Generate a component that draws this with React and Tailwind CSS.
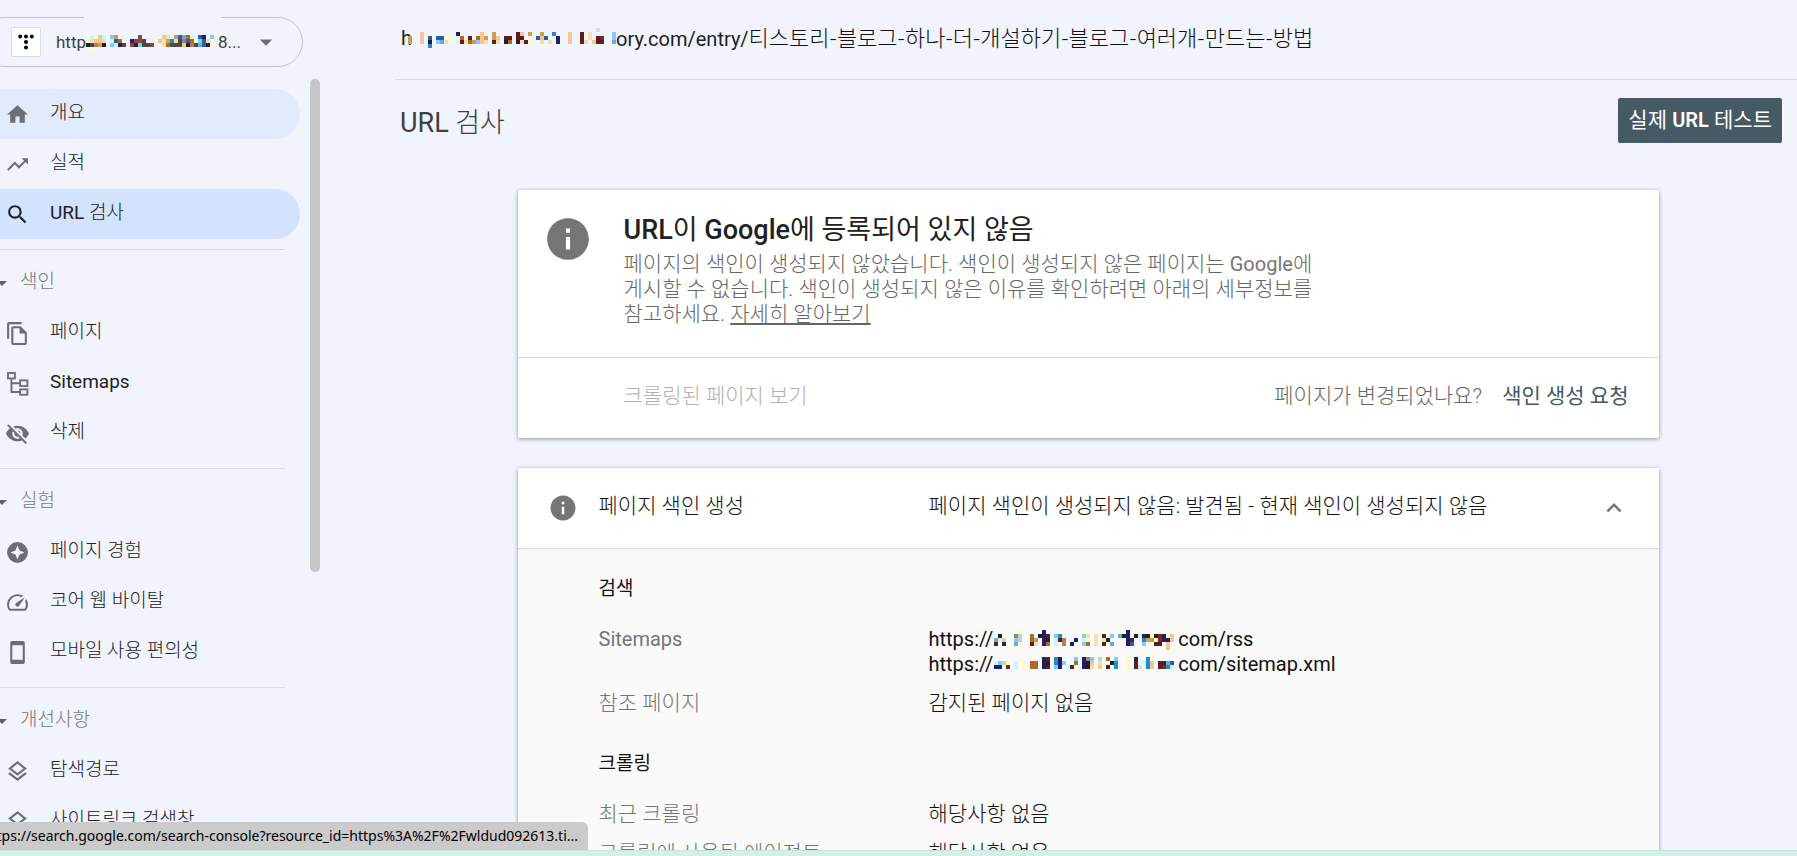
import React from "react";
import {
    MdHome,
    MdTrendingUp,
    MdSearch,
    MdOutlineFileCopy,
    MdVisibilityOff,
    MdSpeed,
    MdStayCurrentPortrait,
    MdOutlineLayers,
    MdInfo,
    MdExpandLess,
    MdArrowDropDown,
} from "react-icons/md";

// One letter per colour of the censored strips
const PALETTE = {
    k: "#222222",
    n: "#1f1f66",
    r: "#5c1f1f",
    R: "#8a2020",
    o: "#b06a20",
    g: "#cf9c55",
    b: "#1f8ccb",
    B: "#2462a8",
    s: "#8ac8f8",
    m: "#66aae4",
    c: "#c8f6fc",
    w: "#eef9fd",
    y: "#fbfbcc",
    e: "#f4dfae",
    p: "#f5c68f",
    t: "#a8825e",
    G: "#b9dcc0",
    l: "#e4d7e4",
    d: "#4a4a4a",
    D: "#8f4444",
};

const PROPERTY_MASK = [
    "wcypc.sg.....D.....pe.gBmoc.Bn.s.",
    "yeppe.cBo..nDDd...pegbedtBoysBey.",
    "kdtgk.scnd.DksddD..eodddpktdmBkwy",
    "wy...............................",
];

const ADDRESS_MASK = [
    "...............................................l....",
    "...p......w.n.....p..g.....rp.gy.g..b...p..r.e.....s",
    "g..p.B.BB.yw.o.r.opg.gp.rr.rr...BpBw.n..p..r.e.rR..s",
    "g..p.k.smeywcreogspe.re.ko.kery..e.e.nw.p..re.prr..m",
    ".....b..............................................",
];

const RSS_MASK = [
    "......y.....n....................n............",
    ".k...tG..o.knr.sb..ww.se.e.rws.mknwkcnkykRnyp.",
    "mcp..sG..og.nk.crt.wn.cy.e.ek....nr..bggyRnnp.",
    "r.n..my.wre.no.c.t.n..so.e.r.m...nBw.sw.rr.pw.",
    "...........................................p..",
];

const SITEMAP_MASK = [
    "......y.....nr.bn..ws.nts.G.o.s..y.n..b...w...",
    "csGy.c.y.oo.nk.bns.wo.nkp.e..kb..y.r.cbp.rrmB.",
    "nn.R.c.y.oo.nr.sn.cr..nke.p.r.b..y.rl.bp.rRbc.",
    "...........................................y..",
];

function Mask({ rows, className }) {
    const width = rows[0].length * 4;
    const height = rows.length * 4;
    return (
        <svg
            width={width}
            height={height}
            viewBox={`0 0 ${width} ${height}`}
            shapeRendering="crispEdges"
            aria-hidden="true"
            className={`inline-block shrink-0 ${className || ""}`}
        >
            {rows.map((row, y) =>
                row.split("").map((cell, x) =>
                    cell === "." ? null : (
                        <rect key={`${x}-${y}`} x={x * 4} y={y * 4} width="4" height="4" fill={PALETTE[cell]} />
                    )
                )
            )}
        </svg>
    );
}

function SitemapIcon({ className }) {
    return (
        <svg viewBox="0 0 24 24" fill="none" stroke="currentColor" strokeWidth="1.8" className={className}>
            <rect x="2.9" y="1.9" width="6.6" height="5.2" />
            <rect x="14.5" y="9" width="7" height="5.4" />
            <rect x="14.5" y="17.6" width="7" height="5.2" />
            <path d="M6.2 7.5v12.7h8M6.2 11.7h8" />
        </svg>
    );
}

function ExperienceIcon({ className }) {
    return (
        <svg viewBox="0 0 24 24" fill="currentColor" className={className}>
            <path
                fillRule="evenodd"
                d="M12 2a10 10 0 1 0 0 20 10 10 0 0 0 0-20zm0 3.2 2 4.800 4.800 2-4.800 2-2 4.800-2-4.800-4.800-2 4.800-2z"
            />
        </svg>
    );
}

// Latin words stay at regular weight inside the light Korean text
function Latin({ children }) {
    return <span className="font-normal">{children}</span>;
}

function NavItem({ icon: Icon, label, tone, active }) {
    return (
        <a
            href="#"
            className={`flex h-[50px] w-[300px] items-center gap-5 rounded-r-full pl-[5px] text-[#202124] ${tone || ""}`}
        >
            <Icon className={`size-[25px] shrink-0 ${active ? "text-[#202124]" : "text-[#6b6e73]"}`} />
            <span className="pb-0.5">{label}</span>
        </a>
    );
}

function NavSection({ title, items }) {
    return (
        <section>
            <hr className="mt-2.5 mb-2 w-[285px] border-[#dcdee2]" />
            <button className="flex h-[50px] items-center text-[#757a80]">
                <MdArrowDropDown className="-ml-2.5 size-6 text-[#5f6368]" />
                <span className="pb-0.5 pl-1.5">{title}</span>
            </button>
            {items.map((item, index) => (
                <NavItem key={index} {...item} />
            ))}
        </section>
    );
}

const TOP_ITEMS = [
    { icon: MdHome, label: "개요", tone: "bg-[#e2ebfd]" },
    { icon: MdTrendingUp, label: "실적" },
    { icon: MdSearch, label: <><Latin>URL</Latin> 검사</>, tone: "bg-[#d3e2fd]", active: true },
];

const SECTIONS = [
    {
        title: "색인",
        items: [
            { icon: MdOutlineFileCopy, label: "페이지" },
            { icon: SitemapIcon, label: <Latin>Sitemaps</Latin> },
            { icon: MdVisibilityOff, label: "삭제" },
        ],
    },
    {
        title: "실험",
        items: [
            { icon: ExperienceIcon, label: "페이지 경험" },
            { icon: MdSpeed, label: "코어 웹 바이탈" },
            { icon: MdStayCurrentPortrait, label: "모바일 사용 편의성" },
        ],
    },
    {
        title: "개선사항",
        items: [
            { icon: MdOutlineLayers, label: "탐색경로" },
            { icon: MdOutlineLayers, label: "사이트링크 검색창" },
        ],
    },
];

function PropertyPicker() {
    return (
        <button className="relative mt-[17px] -ml-5 flex h-[50px] w-[323px] items-center rounded-full border border-[#c4c5c8] pl-[30px] text-[17px] font-normal text-[#3c4043]">
            <span className="absolute -top-px left-[103px] h-px w-[137px] bg-[#f1f4fd]" />
            <span className="flex size-[30px] items-center justify-center rounded-xs border border-[#dcdcdc] bg-white">
                <svg width="16" height="16" viewBox="0 0 16 16" aria-hidden="true">
                    <circle cx="2.200" cy="2.500" r="2" />
                    <circle cx="8" cy="2.500" r="2" />
                    <circle cx="13.800" cy="2.500" r="2" />
                    <circle cx="8" cy="8" r="2" />
                    <circle cx="8" cy="13.500" r="2" />
                </svg>
            </span>
            <span className="flex items-center pt-0.5 pl-[15px]">
                http
                <Mask rows={PROPERTY_MASK} />
                8...
            </span>
            <MdArrowDropDown className="mr-[21px] ml-auto size-[30px] text-[#6b6e73]" />
        </button>
    );
}

function Sidebar() {
    return (
        <aside className="flex w-[395px] shrink-0 flex-col">
            <PropertyPicker />
            <div className="mt-3 flex min-h-0 flex-1">
                <nav className="w-[310px] shrink-0 overflow-hidden pt-2.5 text-[19px]">
                    {TOP_ITEMS.map((item, index) => (
                        <NavItem key={index} {...item} />
                    ))}
                    {SECTIONS.map((section) => (
                        <NavSection key={section.title} {...section} />
                    ))}
                </nav>
                <div className="h-[493px] w-2.5 rounded-full bg-[#c6c6c6]" />
            </div>
        </aside>
    );
}

function DetailRow({ label, className, children }) {
    return (
        <div className={`flex pb-3.5 leading-[25px] ${className || "text-[21px]"}`}>
            <dt className="w-[330px] shrink-0 text-[#757575]">{label}</dt>
            <dd>{children}</dd>
        </div>
    );
}

function VerdictCard() {
    return (
        <section className="rounded-xs bg-white shadow-[0_1px_4px_rgba(0,0,0,0.4)]">
            <div className="flex border-b border-[#dadce0] pt-6 pb-[30px] pl-[25px]">
                <MdInfo className="size-[50px] shrink-0 text-[#757575]" />
                <div className="pl-[31px]">
                    <h2 className="text-[27px] leading-8 font-normal text-[#212121]">
                        <span className="font-medium">URL</span>이 <span className="font-medium">Google</span>에
                        등록되어 있지 않음
                    </h2>
                    <p className="max-w-[720px] pt-1.5 text-[21px] leading-[25px] break-keep text-[#666666]">
                        페이지의 색인이 생성되지 않았습니다. 색인이 생성되지 않은 페이지는{" "}
                        <span className="text-xl leading-[25px] font-normal text-[#757575]">Google</span>에 게시할 수
                        없습니다. 색인이 생성되지 않은 이유를 확인하려면 아래의 세부정보를 참고하세요.{" "}
                        <a href="#" className="underline">
                            자세히 알아보기
                        </a>
                    </p>
                </div>
            </div>
            <div className="flex h-20 items-center pr-[30px] pb-0.5 pl-[106px] text-[21px]">
                <button disabled className="text-[#b0b0b0]">
                    크롤링된 페이지 보기
                </button>
                <span className="ml-auto text-[#666666]">페이지가 변경되었나요?</span>
                <button className="pl-5 font-normal text-[#455a64]">색인 생성 요청</button>
            </div>
        </section>
    );
}

function IndexingCard() {
    return (
        <section className="rounded-xs bg-[#fafafa] text-[#111111] shadow-[0_1px_4px_rgba(0,0,0,0.4)]">
            <button className="flex h-[81px] w-full items-center border-b border-[#dadce0] bg-white pr-[30px] pl-[30px] text-left text-[21px]">
                <MdInfo className="size-[30px] shrink-0 text-[#757575]" />
                <span className="w-[351px] shrink-0 pb-0.5 pl-[21px]">페이지 색인 생성</span>
                <span className="pb-0.5">페이지 색인이 생성되지 않음: 발견됨 - 현재 색인이 생성되지 않음</span>
                <MdExpandLess className="ml-auto size-[30px] text-[#757575]" />
            </button>
            <div className="pt-[27px] pl-[81px]">
                <h3 className="pb-[26px] text-[19px] leading-[25px] font-normal">검색</h3>
                <dl>
                    <DetailRow label="Sitemaps" className="text-xl leading-[25px] font-normal">
                        <p className="flex items-center">
                            https://
                            <Mask rows={RSS_MASK} className="ml-px" />
                            com/rss
                        </p>
                        <p className="flex items-center">
                            https://
                            <Mask rows={SITEMAP_MASK} className="ml-px" />
                            com/sitemap.xml
                        </p>
                    </DetailRow>
                    <DetailRow label="참조 페이지">감지된 페이지 없음</DetailRow>
                </dl>
                <h3 className="pt-[21px] pb-[26px] text-[19px] leading-[25px] font-normal">크롤링</h3>
                <dl>
                    <DetailRow label="최근 크롤링">해당사항 없음</DetailRow>
                    <DetailRow label="크롤링에 사용된 에이전트">해당사항 없음</DetailRow>
                </dl>
            </div>
        </section>
    );
}

function App() {
    return (
        <div className="relative flex h-screen overflow-hidden bg-[#f1f4fd] font-[Roboto,'Noto_Sans_CJK_KR',sans-serif] font-light">
            <Sidebar />
            <main className="min-w-0 flex-1">
                <div className="flex h-20 items-center border-b border-[#dadce0] pb-1 pl-1.5 text-xl font-normal whitespace-nowrap text-[#202124]">
                    h
                    <Mask rows={ADDRESS_MASK} className="-ml-1" />
                    <span>
                        ory.com/entry/
                        <span className="font-['Noto_Sans_CJK_KR',sans-serif] text-[22px] leading-7 font-light text-[#111111]">
                            티스토리-블로그-하나-더-개설하기-블로그-여러개-만드는-방법
                        </span>
                    </span>
                </div>
                <div className="flex items-center justify-between pt-[18px] pr-[15px] pl-[5px]">
                    <h1 className="pt-1 text-[27px] leading-10 text-[#3c4043]">
                        <Latin>URL</Latin> 검사
                    </h1>
                    <button className="h-[45px] rounded-xs bg-[#455a64] px-2.5 text-[21px] font-normal text-white">
                        실제 <span className="text-xl font-semibold">URL</span> 테스트
                    </button>
                </div>
                <div className="pt-[47px] pr-4">
                    <div className="mx-auto flex max-w-[1141px] flex-col gap-[30px]">
                        <VerdictCard />
                        <IndexingCard />
                    </div>
                </div>
            </main>
            <div className="absolute bottom-1.5 left-0 flex h-7 w-[588px] items-center justify-end overflow-hidden rounded-tr-md bg-[#cbcbcb] pr-2.5 font-['Noto_Sans',sans-serif] text-sm font-normal whitespace-nowrap text-black">
                https://search.google.com/search-console?resource_id=https%3A%2F%2Fwldud092613.ti...
            </div>
            <div className="absolute inset-x-0 bottom-0 h-1.5 border-t border-[#c4e6dc] bg-[#d2f2e8]" />
        </div>
    );
}

export default App;
